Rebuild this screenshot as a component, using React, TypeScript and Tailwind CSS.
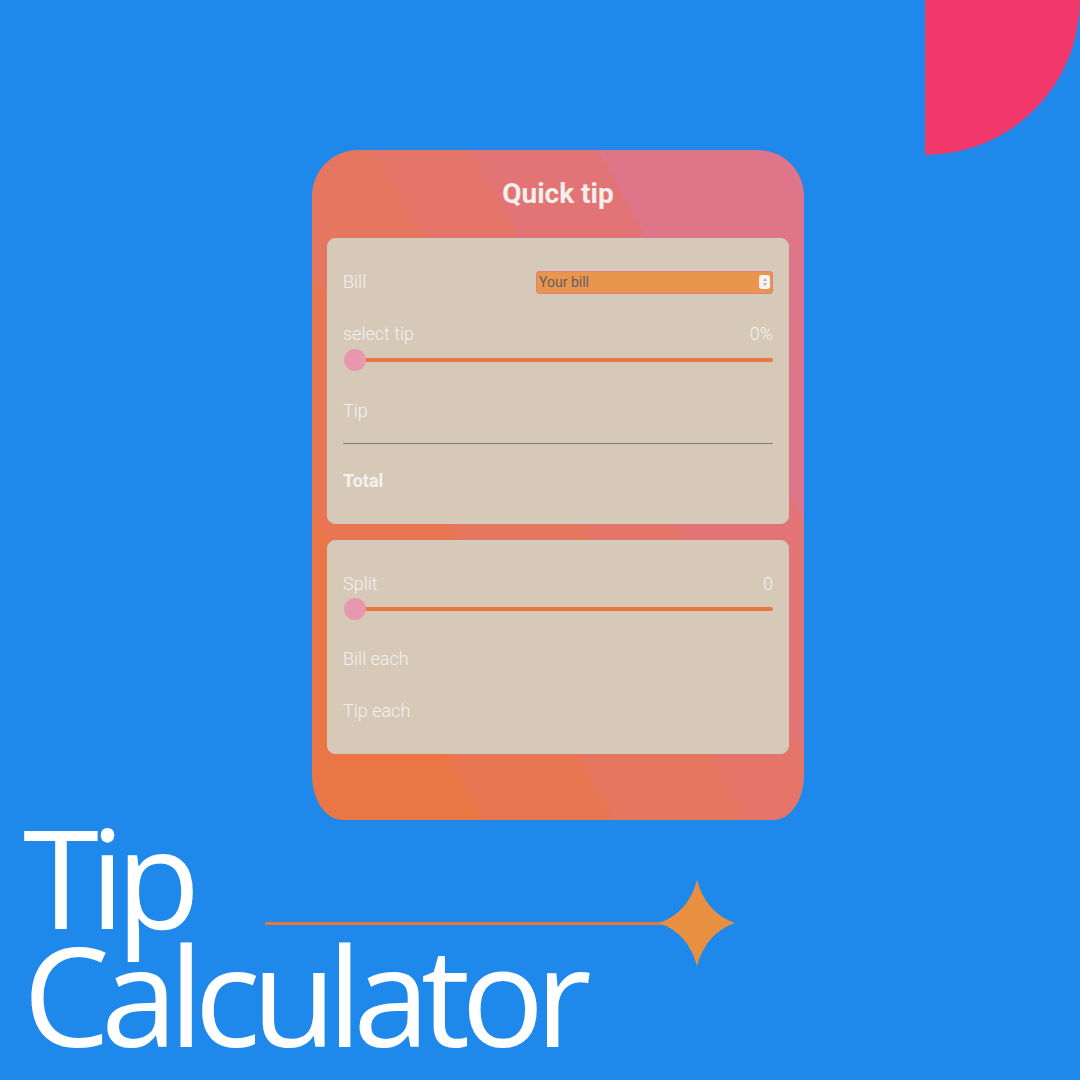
const LABEL =
  "font-['Roboto',sans-serif] text-[18px] font-light leading-[20px] text-[#F3F1EE]";

function Slider() {
  return (
    <div className="relative flex h-[22px] items-center">
      <div className="ml-[4px] h-[4px] w-full rounded-full bg-[#E8763F]" />
      <div className="absolute left-px top-0 h-[22px] w-[22px] rounded-full bg-[#E797AE]" />
    </div>
  );
}

function BillInput() {
  return (
    <div className="flex h-[23px] w-[237px] items-center justify-between rounded-[3px] border border-[#DA8088] bg-[#EA954D] pl-[2px] pr-[2px]">
      <span className="font-['Roboto',sans-serif] text-[14px] leading-none text-[#5F6063]">
        Your bill
      </span>
      <div className="flex h-[14px] w-[11px] flex-col items-center justify-center gap-[2px] rounded-[3px] bg-[#F6F2EE]">
        <div className="h-0 w-0 border-x-[2.5px] border-b-[3px] border-x-transparent border-b-[#B9B3AD]" />
        <div className="h-0 w-0 border-x-[2.5px] border-t-[3px] border-x-transparent border-t-[#B9B3AD]" />
      </div>
    </div>
  );
}

function Star() {
  return (
    <svg width="80" height="86" viewBox="-40 -43 80 86" className="-ml-[8px] shrink-0">
      <path
        d="M0,-43 Q-9,-10 -38,0 Q-9,10 0,43 Q9,10 38,0 Q9,-10 0,-43 Z"
        fill="#E8903F"
      />
    </svg>
  );
}

export default function App() {
  return (
    <div className="relative h-[1080px] w-[1080px] overflow-hidden bg-[#1E89EA]">
      {/* corner decoration */}
      <div className="absolute right-0 top-0 h-[155px] w-[155px] rounded-br-[155px] bg-[#F2386B]" />

      <div className="flex flex-col">
        <div className="pl-[312px] pt-[150px]">
          <div className="flex h-[670px] w-[492px] flex-col rounded-t-[46px] rounded-bl-[30px_45px] rounded-br-[30px_45px] bg-[linear-gradient(61deg,#E97644_0px,#E97644_150px,#E87653_150px,#E87653_265px,#E5765F_265px,#E5765F_380px,#E47568_380px,#E47568_463px,#E27476_463px,#E27476_575px,#DF7588_575px,#DF7588_755px)] px-[15px]">
            <div className="flex h-[88px] items-center justify-center">
              <span className="font-['Roboto',sans-serif] text-[28px] font-bold text-[#F4EFEA]">
                Quick tip
              </span>
            </div>

            <div className="flex h-[286px] flex-col rounded-[8px] border border-[#CFC9C3] bg-[#D6C9B8] px-[15px]">
              <div className="mt-[31px] flex h-[24px] items-center justify-between">
                <span className={LABEL}>Bill</span>
                <BillInput />
              </div>
              <div className="mt-[30px] flex h-[20px] items-center justify-between">
                <span className={LABEL}>select tip</span>
                <span className={LABEL}>0%</span>
              </div>
              <div className="mt-[5px]">
                <Slider />
              </div>
              <div className="mt-[28px] h-[20px]">
                <span className={LABEL}>Tip</span>
              </div>
              <div className="mt-[24px] h-px bg-[#7A7F88]" />
              <div className="mt-[25px] h-[20px]">
                <span className={`${LABEL} !font-bold`}>Total</span>
              </div>
            </div>

            <div className="mt-[16px] flex h-[214px] flex-col rounded-[8px] border border-[#CFC9C3] bg-[#D6C9B8] px-[15px]">
              <div className="mt-[33px] flex h-[20px] items-center justify-between">
                <span className={LABEL}>Split</span>
                <span className={LABEL}>0</span>
              </div>
              <div className="mt-[4px]">
                <Slider />
              </div>
              <div className="mt-[27px] h-[20px]">
                <span className={LABEL}>Bill each</span>
              </div>
              <div className="mt-[32px] h-[20px]">
                <span className={LABEL}>Tip each</span>
              </div>
            </div>
          </div>
        </div>

        <div className="-mt-[4px] pl-[23px] font-['Open_Sans',sans-serif] text-[138px] leading-[118px] tracking-[-0.065em] text-white">
          <div className="flex h-[118px] items-start">
            <span className="w-[242px] shrink-0">Tip</span>
            <div className="mt-[64px] flex h-[86px] shrink-0 items-center">
              <div className="h-[3px] w-[400px] bg-[#E8753E]" />
              <Star />
            </div>
          </div>
          <div>Calculator</div>
        </div>
      </div>
    </div>
  );
}
